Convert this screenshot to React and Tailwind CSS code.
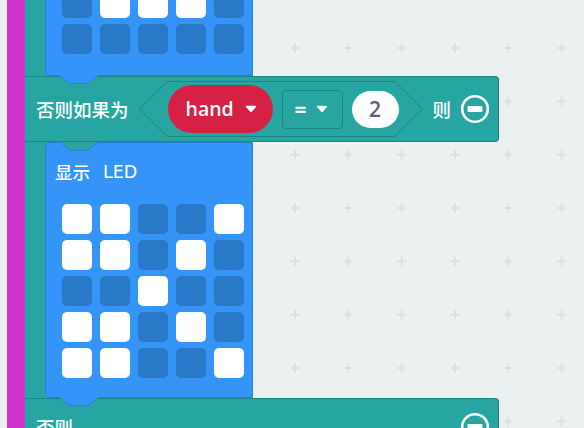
import React from "react";

const TEAL = "bg-[#26a5a2]";

const topRows = [
  [0, 1, 1, 1, 0],
  [0, 0, 0, 0, 0],
];

const ledRows = [
  [1, 1, 0, 0, 1],
  [1, 1, 0, 1, 0],
  [0, 0, 1, 0, 0],
  [1, 1, 0, 1, 0],
  [1, 1, 0, 0, 1],
];

function LedRow({ row }) {
  return (
    <div className="flex gap-[8px]">
      {row.map((on, i) => (
        <div
          key={i}
          className={
            on
              ? "w-[30px] h-[30px] rounded-[5px] bg-white"
              : "w-[30px] h-[30px] rounded-[5px] bg-[#2979c9]"
          }
        />
      ))}
    </div>
  );
}

function Caret({ className }) {
  return (
    <svg width="12" height="8" viewBox="0 0 12 8" className={className}>
      <path d="M1.5 1.5 L10.5 1.5 L6 6.5 Z" fill="white" stroke="white" strokeWidth="1.5" strokeLinejoin="round" />
    </svg>
  );
}

function MinusCircle() {
  return (
    <svg width="30" height="30" viewBox="0 0 30 30">
      <circle cx="15" cy="15" r="12.8" fill="none" stroke="white" strokeWidth="2.6" />
      <rect x="7.5" y="12" width="15" height="6" rx="1" fill="white" />
    </svg>
  );
}

// blue tab hanging below a statement block
function Tab() {
  return (
    <svg width="40" height="10" viewBox="0 0 40 10" className="absolute left-[35px] top-[-2px]">
      <path d="M0 0 L0 1 L10 8.5 L28 8.5 L38 1 L38 0 Z" fill="#3594f8" />
      <path d="M0 1 L10 8.5 L28 8.5 L38 1" fill="none" stroke="#2b7fd3" strokeWidth="1" />
    </svg>
  );
}

function GridBg() {
  return (
    <svg className="absolute inset-0" width="584" height="428">
      <defs>
        <pattern id="cross" x="1.67" y="21.33" width="53.33" height="53.33" patternUnits="userSpaceOnUse">
          <path d="M22.2 26.67 H31.2 M26.67 22.2 V31.2" stroke="#d9e0e1" strokeWidth="2" />
        </pattern>
      </defs>
      <rect width="584" height="428" fill="url(#cross)" />
    </svg>
  );
}

export default function App() {
  return (
    <div
      className="relative w-[584px] h-[428px] overflow-hidden bg-[#ebf0f0]"
      style={{ fontFamily: '"Noto Sans CJK SC", "Noto Sans", sans-serif' }}
    >
      <GridBg />
      <div className="relative flex h-full pl-[7px]">
        {/* outer magenta block arm */}
        <div className="w-[18px] h-full bg-[#d032cf]" />

        <div className="flex flex-col w-[474px]">
          {/* previous LED block, cut at top */}
          <div className={`flex shrink-0 w-[228px] h-[76px] ${TEAL}`}>
            <div className="w-[20px]" />
            <div className="w-[208px] h-[76px] rounded-b-[4px] border border-t-0 border-[#2b7fd3] bg-[#3594f8] overflow-hidden flex flex-col justify-end gap-[6px] pl-[16px] pb-[21px]">
              {topRows.map((r, i) => (
                <LedRow key={i} row={r} />
              ))}
            </div>
          </div>

          {/* else if row */}
          <div className={`relative flex shrink-0 items-center h-[66px] pl-[11px] pr-[8px] rounded-r-[4px] border border-l-0 border-[#1d8480] ${TEAL}`}>
            <Tab />
            <span className="text-white text-[18.5px] font-medium leading-none">否则如果为</span>
            <div className="relative ml-[10px] w-[284px] h-[56px] flex items-center pl-[29px]">
              <svg width="284" height="56" viewBox="0 0 284 56" className="absolute inset-0">
                <path d="M0.5 28 L28.5 0.5 L256 0.5 L283.5 28 L256 55.5 L28.5 55.5 Z" fill="#26a5a2" stroke="#1d8480" strokeWidth="1" />
              </svg>
              <div className="relative flex items-center gap-[11px] w-[105px] h-[48px] rounded-full bg-[#d72144] pl-[18px]">
                <span className="text-white text-[19.5px] font-semibold leading-none" style={{ fontFamily: '"Open Sans", sans-serif' }}>
                  hand
                </span>
                <Caret />
              </div>
              <div className="relative ml-[9px] flex items-center gap-[9px] w-[61px] h-[39px] rounded-[4px] border border-[#1d8480] pl-[12px]">
                <span className="text-white text-[21px] font-bold leading-none" style={{ fontFamily: '"Open Sans", sans-serif' }}>
                  =
                </span>
                <Caret />
              </div>
              <div className="relative ml-[9px] flex items-center justify-center w-[47px] h-[37px] rounded-full bg-white">
                <span className="text-[#575e75] text-[21px] font-semibold leading-none" style={{ fontFamily: '"Open Sans", sans-serif' }}>
                  2
                </span>
              </div>
            </div>
            <span className="ml-[10px] text-white text-[18.5px] font-medium leading-none">则</span>
            <div className="ml-[9px] flex">
              <MinusCircle />
            </div>
          </div>

          {/* show LED block */}
          <div className={`flex shrink-0 w-[228px] h-[256px] ${TEAL}`}>
            <div className="w-[20px]" />
            <div className="relative w-[208px] h-[256px] rounded-[4px] border border-[#2b7fd3] bg-[#3594f8]">
              <svg width="40" height="10" viewBox="0 0 40 10" className="absolute left-[14px] top-[-1px]">
                <path d="M0 0 L10 8.5 L28 8.5 L38 0 Z" fill="#26a5a2" />
                <path d="M0 0 L10 8.5 L28 8.5 L38 0" fill="none" stroke="#2b7fd3" strokeWidth="1" />
              </svg>
              <div className="flex items-center pt-[19px] pl-[9px] h-[39px] text-white text-[17.5px] font-medium leading-[20px]">
                <span>显示</span>
                <span className="ml-[13px] text-[17.5px]" style={{ fontFamily: '"DejaVu Sans", sans-serif' }}>
                  LED
                </span>
              </div>
              <div className="mt-[22px] pl-[16px] flex flex-col gap-[6px]">
                {ledRows.map((r, i) => (
                  <LedRow key={i} row={r} />
                ))}
              </div>
            </div>
          </div>

          {/* else row */}
          <div className={`relative flex shrink-0 items-center h-[58px] pl-[11px] pr-[8px] rounded-tr-[4px] border border-l-0 border-[#1d8480] ${TEAL}`}>
            <Tab />
            <span className="text-white text-[18.5px] font-medium leading-none">否则</span>
            <div className="ml-auto flex">
              <MinusCircle />
            </div>
          </div>
        </div>
      </div>
    </div>
  );
}
